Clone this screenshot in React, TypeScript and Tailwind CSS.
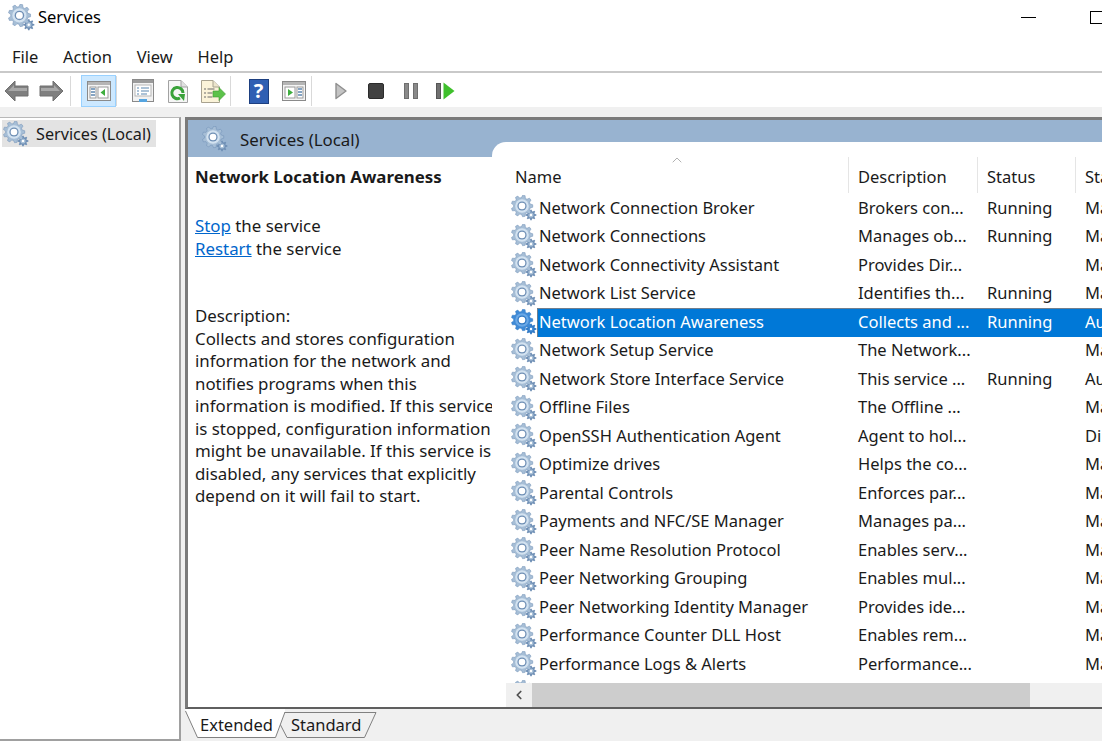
import { ReactNode } from 'react';
import { ChevronLeft, ChevronUp } from 'lucide-react';

const rows = [
  ['Network Connection Broker', 'Brokers con...', 'Running', 'Ma'],
  ['Network Connections', 'Manages ob...', 'Running', 'Ma'],
  ['Network Connectivity Assistant', 'Provides Dir...', '', 'Ma'],
  ['Network List Service', 'Identifies th...', 'Running', 'Ma'],
  ['Network Location Awareness', 'Collects and ...', 'Running', 'Au'],
  ['Network Setup Service', 'The Network...', '', 'Ma'],
  ['Network Store Interface Service', 'This service ...', 'Running', 'Au'],
  ['Offline Files', 'The Offline ...', '', 'Ma'],
  ['OpenSSH Authentication Agent', 'Agent to hol...', '', 'Di'],
  ['Optimize drives', 'Helps the co...', '', 'Ma'],
  ['Parental Controls', 'Enforces par...', '', 'Ma'],
  ['Payments and NFC/SE Manager', 'Manages pa...', '', 'Ma'],
  ['Peer Name Resolution Protocol', 'Enables serv...', '', 'Ma'],
  ['Peer Networking Grouping', 'Enables mul...', '', 'Ma'],
  ['Peer Networking Identity Manager', 'Provides ide...', '', 'Ma'],
  ['Performance Counter DLL Host', 'Enables rem...', '', 'Ma'],
  ['Performance Logs & Alerts', 'Performance...', '', 'Ma'],
  ['', '', '', ''],
];

const descLines = [
  'Description:',
  'Collects and stores configuration',
  'information for the network and',
  'notifies programs when this',
  'information is modified. If this service',
  'is stopped, configuration information',
  'might be unavailable. If this service is',
  'disabled, any services that explicitly',
  'depend on it will fail to start.',
];

function gearPath(cx: number, cy: number, R: number, r: number, teeth: number) {
  const pts: string[] = [];
  const step = (Math.PI * 2) / teeth;
  for (let i = 0; i < teeth; i++) {
    const a = i * step;
    const p = [
      [a - step * 0.34, r],
      [a - step * 0.17, R],
      [a + step * 0.17, R],
      [a + step * 0.34, r],
    ];
    p.forEach(([an, rad]) => pts.push(`${(cx + Math.cos(an) * rad).toFixed(2)},${(cy + Math.sin(an) * rad).toFixed(2)}`));
  }
  return 'M' + pts.join('L') + 'Z';
}

const bigGear = gearPath(11, 11, 10.8, 8.4, 9);
const smallGear = gearPath(20, 20, 5.4, 3.9, 8);

function Gear({ size = 26, selected = false }: { size?: number; selected?: boolean }) {
  const dark = selected ? '#2f78c4' : '#6f8fb5';
  const mid = selected ? '#3f8ad6' : '#a6bed6';
  const light = selected ? '#6aa8e6' : '#d3e2f0';
  return (
    <svg width={size} height={size} viewBox="0 0 26 26" className="shrink-0">
      <path d={smallGear} fill={dark} />
      <circle cx="20" cy="20" r="2.6" fill={mid} />
      <circle cx="20" cy="20" r="1.2" fill="#ffffff" />
      <path d={bigGear} fill={mid} stroke={dark} strokeWidth="0.5" />
      <circle cx="11" cy="11" r="6.8" fill={light} />
      <circle cx="11" cy="11" r="4.6" fill={dark} />
      <circle cx="11" cy="11" r="3.3" fill="#ffffff" />
    </svg>
  );
}

function Sep() {
  return <div className="w-px h-[30px] mt-[1px] bg-[#d9d9d9] shrink-0" />;
}

function Btn({ children, w = 'w-[35px]', active = false }: { children: ReactNode; w?: string; active?: boolean }) {
  return (
    <div className={`${w} h-[32px] flex items-center justify-center shrink-0 ${active ? 'bg-[#cce8ff] border border-[#99d1ff]' : ''}`}>
      {children}
    </div>
  );
}

function Arrow({ flip = false }: { flip?: boolean }) {
  return (
    <svg width="25" height="24" viewBox="0 0 25 24" className={flip ? '-scale-x-100' : ''}>
      <path d="M1 12 L11 2 L11 7 L24 7 L24 17 L11 17 L11 22 Z" fill="#7f7f7f" stroke="#707070" strokeWidth="1" strokeLinejoin="round" />
      <path d="M4 12 L10 6 L10 9 L23 9 L23 12 Z" fill="#a8a8a8" />
    </svg>
  );
}

function ConsoleTreeIcon() {
  return (
    <svg width="24" height="22" viewBox="0 0 24 22">
      <rect x="0.5" y="1.5" width="23" height="19" fill="#f4f4f4" stroke="#8a8a8a" />
      <rect x="1" y="2" width="22" height="3" fill="#b5b5b5" />
      <rect x="3" y="7" width="6" height="11" fill="#ffffff" stroke="#9a9a9a" />
      <path d="M4 9h4M4 12h4M4 15h4" stroke="#5d87b0" strokeWidth="1.4" />
      <rect x="11" y="7" width="10" height="11" fill="#ffffff" stroke="#9a9a9a" />
      <path d="M18 9 L18 16 L13.5 12.5 Z" fill="#3fae3f" />
    </svg>
  );
}

function PropsIcon() {
  return (
    <svg width="24" height="26" viewBox="0 0 24 26">
      <rect x="1.5" y="1.5" width="21" height="22" fill="#f2f2f2" stroke="#8a8a8a" />
      <rect x="2" y="2" width="20" height="3" fill="#9b9b9b" />
      <rect x="4" y="7" width="16" height="11" fill="#ffffff" stroke="#b5b5b5" />
      <path d="M6 10h2M10 10h8M6 13h2M10 13h8M6 16h2M10 16h6" stroke="#5d87b0" strokeWidth="1.2" />
      <rect x="8" y="21" width="8" height="3" fill="#56a5e0" />
    </svg>
  );
}

function RefreshIcon() {
  return (
    <svg width="22" height="25" viewBox="0 0 22 25">
      <path d="M1.5 1.5 H14 L20.5 8 V23.5 H1.5 Z" fill="#f6f6f6" stroke="#a2a2a2" />
      <path d="M14 1.5 V8 H20.5" fill="#e0e0e0" stroke="#a2a2a2" />
      <path d="M16 14 A5.6 5.6 0 1 0 13 19" fill="none" stroke="#3aa23a" strokeWidth="3" />
      <path d="M11 15 L18 15 L17 22 Z" fill="#3aa23a" />
    </svg>
  );
}

function ExportIcon() {
  return (
    <svg width="26" height="25" viewBox="0 0 26 25">
      <path d="M1.5 1.5 H13 L19.5 8 V23.5 H1.5 Z" fill="#fbf3d9" stroke="#a8a290" />
      <path d="M13 1.5 V8 H19.5" fill="#ece5cc" stroke="#a8a290" />
      <path d="M4 10h2M7.5 10h7M4 14h2M7.5 14h5M4 18h2M7.5 18h5" stroke="#6b6b6b" strokeWidth="1.2" />
      <path d="M13 12 H19 V8.5 L25.5 15 L19 21.5 V18 H13 Z" fill="#5cc24a" stroke="#3f9a35" strokeWidth="0.6" />
    </svg>
  );
}

function HelpIcon() {
  return (
    <div className="w-[20px] h-[25px] bg-[#2f5fb3] border border-[#1d3f80] flex items-center justify-center text-white font-bold text-[20px] leading-none">
      ?
    </div>
  );
}

function ShowPaneIcon() {
  return (
    <svg width="24" height="22" viewBox="0 0 24 22">
      <rect x="0.5" y="1.5" width="23" height="19" fill="#f4f4f4" stroke="#8a8a8a" />
      <rect x="1" y="2" width="22" height="3" fill="#b5b5b5" />
      <rect x="3" y="7" width="10" height="11" fill="#ffffff" stroke="#9a9a9a" />
      <path d="M6 9 L6 16 L11 12.5 Z" fill="#3fae3f" />
      <rect x="15" y="7" width="6" height="11" fill="#ffffff" stroke="#9a9a9a" />
      <path d="M16 9h4M16 12h4M16 15h4" stroke="#5d87b0" strokeWidth="1.4" />
    </svg>
  );
}

function Play() {
  return (
    <svg width="14" height="18" viewBox="0 0 14 18">
      <path d="M2 1.5 L12 9 L2 16.5 Z" fill="#c4c4c4" stroke="#8f8f8f" strokeWidth="1.4" strokeLinejoin="round" />
    </svg>
  );
}

function Stop() {
  return <div className="w-[16px] h-[16px] rounded-[2px] bg-[#414141] border border-[#2b2b2b]" />;
}

function Pause() {
  return (
    <div className="flex gap-[4px]">
      <div className="w-[5px] h-[16px] bg-[#8a8a8a] border border-[#6f6f6f]" />
      <div className="w-[5px] h-[16px] bg-[#8a8a8a] border border-[#6f6f6f]" />
    </div>
  );
}

function Resume() {
  return (
    <div className="flex items-center gap-[2px]">
      <div className="w-[5px] h-[16px] bg-[#707070] border border-[#555555]" />
      <svg width="12" height="18" viewBox="0 0 12 18">
        <path d="M0.5 0.5 L11.5 9 L0.5 17.5 Z" fill="#3fc02c" />
      </svg>
    </div>
  );
}

export default function App() {
  return (
    <div className="w-[1102px] h-[741px] overflow-hidden bg-white flex flex-col text-[16.5px] text-[#1a1a1a] font-['Noto_Sans','Open_Sans',sans-serif]">
      {/* title bar */}
      <div className="h-[40px] flex items-center shrink-0 pl-[8px] pb-[6px]">
        <Gear size={27} />
        <span className="ml-[3px] text-[#000]">Services</span>
        <div className="ml-auto flex items-center h-[32px]">
          <div className="w-[15px] h-[1px] bg-black mr-[54px]" />
          <div className="w-[12px] h-[13px] border border-black border-r-0" />
        </div>
      </div>

      {/* menu */}
      <div className="h-[33px] shrink-0 flex items-center pl-[12px] gap-[24.7px] pt-[3px] border-b-2 border-[#c9c9c9]">
        <span>File</span>
        <span>Action</span>
        <span>View</span>
        <span>Help</span>
      </div>

      {/* toolbar */}
      <div className="h-[34px] shrink-0 flex items-start pt-[2px] pl-0 bg-white">
        <Btn w="w-[32px]"><Arrow /></Btn>
        <Btn w="w-[38px]"><Arrow flip /></Btn>
        <Sep />
        <div className="w-[10px]" />
        <Btn active><ConsoleTreeIcon /></Btn>
        <Sep />
        <div className="w-[8px]" />
        <Btn><PropsIcon /></Btn>
        <Btn><RefreshIcon /></Btn>
        <Btn><ExportIcon /></Btn>
        <Sep />
        <div className="w-[10px]" />
        <Btn><HelpIcon /></Btn>
        <Btn><ShowPaneIcon /></Btn>
        <Sep />
        <div className="w-[11px]" />
        <Btn><Play /></Btn>
        <Btn><Stop /></Btn>
        <Btn><Pause /></Btn>
        <Btn><Resume /></Btn>
      </div>

      {/* main */}
      <div className="flex-1 min-h-0 flex bg-[#f0f0f0] pt-[10px] gap-[4px]">
        {/* tree */}
        <div className="w-[181px] shrink-0 bg-white border-r-2 border-b-2 border-t border-[#a0a0a0] border-t-[#b8b8b8] pt-[2px] pl-[2px]">
          <div className="w-[154px] h-[27px] bg-[#e3e3e3] flex items-center pl-[1px] gap-[7px]">
            <Gear size={26} />
            <span className="whitespace-nowrap pt-[2px] text-[16.2px]">Services (Local)</span>
          </div>
        </div>

        {/* right pane */}
        <div className="flex-1 min-w-0 flex flex-col">
          <div className="flex-1 min-h-0 flex flex-col border-l-[3px] border-t-[3px] border-b-2 border-[#7a7a7a] border-b-[#5f5f5f]">
            <div className="flex-1 min-h-0 flex bg-[#98b3d0]">
              {/* details */}
              <div className="w-[304px] shrink-0 flex flex-col text-[16.85px]">
                <div className="h-[37px] shrink-0 flex items-center pl-[14px] gap-[12px]">
                  <Gear size={26} />
                  <span className="pt-[2px]">Services (Local)</span>
                </div>
                <div className="flex-1 bg-white pl-[7px] pt-[9px] leading-[22.5px]">
                  <div className="font-bold h-[26px] whitespace-nowrap">Network Location Awareness</div>
                  <div className="mt-[23px]"><span className="text-[#0066cc] underline">Stop</span> the service</div>
                  <div><span className="text-[#0066cc] underline">Restart</span> the service</div>
                  <div className="mt-[45px]">
                    {descLines.map(l => (
                      <div key={l} className="whitespace-nowrap">{l}</div>
                    ))}
                  </div>
                </div>
              </div>

              {/* list */}
              <div className="flex-1 min-w-0 mt-[22px] bg-white rounded-tl-[14px] flex">
                <div className="w-[14px] shrink-0" />
                <div className="flex-1 min-w-0 flex flex-col">
                  <div className="h-[52px] shrink-0 flex relative pt-[15px] pb-[1px]">
                    <ChevronUp size={16} strokeWidth={1} className="absolute left-[163px] top-[10px] text-[#8a8a8a]" />
                    <div className="w-[342px] shrink-0 pl-[9px] flex items-center pt-[4px]">Name</div>
                    <div className="w-[129px] shrink-0 pl-[9px] flex items-center pt-[4px] border-l border-[#e5e5e5]">Description</div>
                    <div className="w-[98px] shrink-0 pl-[9px] flex items-center pt-[4px] border-l border-[#e5e5e5]">Status</div>
                    <div className="flex-1 pl-[9px] flex items-center pt-[4px] border-l border-[#e5e5e5] whitespace-nowrap overflow-hidden">Startup</div>
                  </div>
                  <div className="flex-1 min-h-0 overflow-hidden">
                    {rows.map((r, i) => {
                      const sel = i === 4;
                      return (
                        <div key={i} className="h-[28.5px] flex items-center">
                          <div className="w-[31px] shrink-0 flex justify-end">
                            <Gear size={26} selected={sel} />
                          </div>
                          <div className={`flex-1 min-w-0 h-full flex items-center whitespace-nowrap overflow-hidden ${sel ? 'bg-[#0078d7] text-white border-t border-l border-[#6f7f8f]' : ''}`}>
                            <div className={`${sel ? 'w-[320px] pl-[1px]' : 'w-[321px] pl-[2px]'} shrink-0`}>{r[0]}</div>
                            <div className="w-[129px] shrink-0">{r[1]}</div>
                            <div className="w-[98px] shrink-0">{r[2]}</div>
                            <div className="flex-1">{r[3]}</div>
                          </div>
                        </div>
                      );
                    })}
                  </div>
                  {/* scrollbar */}
                  <div className="h-[24px] shrink-0 bg-[#f0f0f0] flex">
                    <div className="w-[26px] flex items-center justify-center">
                      <ChevronLeft size={14} strokeWidth={3} className="text-[#505050]" />
                    </div>
                    <div className="w-[498px] bg-[#cdcdcd]" />
                  </div>
                </div>
              </div>
            </div>
          </div>

          {/* tabs */}
          <div className="h-[32px] shrink-0 relative flex items-start pl-[15px] pt-[4px]">
            <svg width="200" height="32" viewBox="0 0 200 32" className="absolute left-0 top-0">
              <path d="M91 3.5 H191 L179.5 28.5 H102 L95 15 Z" fill="#f0f0f0" stroke="#808080" />
              <path d="M0 0 L12.5 28.5 H90.5 L100 3 V0 Z" fill="#ffffff" />
              <path d="M0.5 2 L12.5 28.5 H90.5 L100 3" fill="none" stroke="#808080" />
            </svg>
            <span className="relative">Extended</span>
            <span className="relative ml-[18px]">Standard</span>
          </div>
        </div>
      </div>
    </div>
  );
}
